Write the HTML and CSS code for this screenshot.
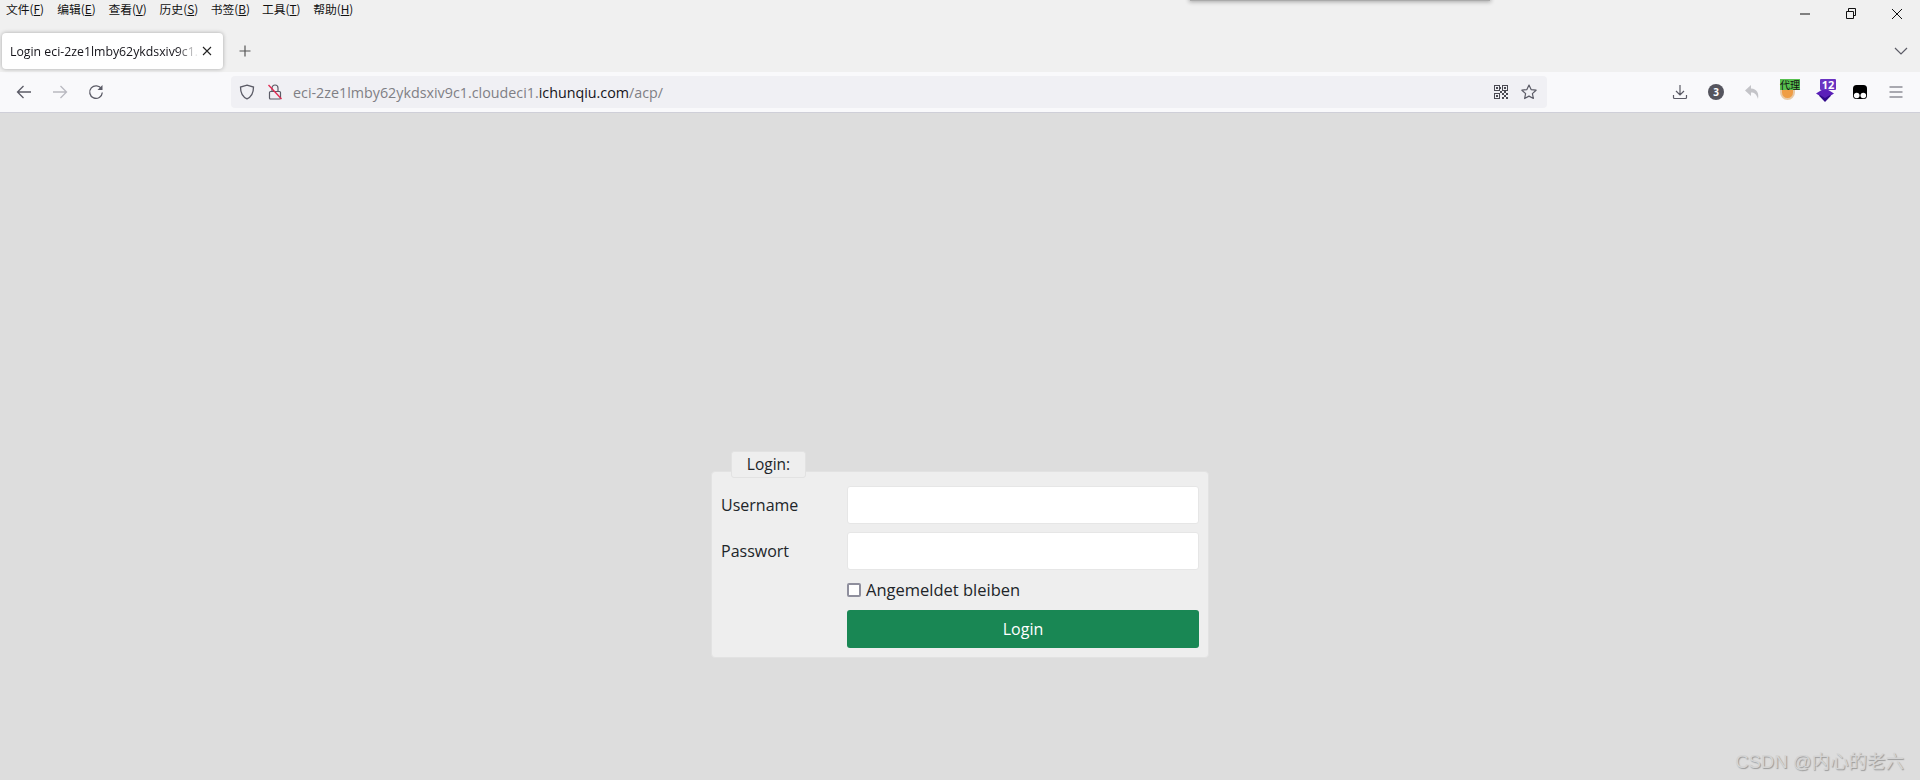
FILE: index.html
```html
<!DOCTYPE html>
<html lang="de">
<head>
<meta charset="utf-8">
<title>Login</title>
<link rel="stylesheet" href="styles.css">
</head>
<body>
<div class="popup-edge"></div>
<header class="chrome">
  <div class="titlebar">
    <nav class="menu">
      <span>文件(<u>F</u>)</span><span>编辑(<u>E</u>)</span><span>查看(<u>V</u>)</span><span>历史(<u>S</u>)</span><span>书签(<u>B</u>)</span><span>工具(<u>T</u>)</span><span>帮助(<u>H</u>)</span>
    </nav>
    <div class="winctl">
      <svg class="wbtn" viewBox="0 0 46 28"><path d="M18 14h10" stroke="#111" fill="none"/></svg>
      <svg class="wbtn" viewBox="0 0 46 28"><path d="M18.500 11.500h7v7h-7zM20.500 11v-2.500h7v7h-2" stroke="#111" fill="none"/></svg>
      <svg class="wbtn" viewBox="0 0 46 28"><path d="M18 9l10 10M28 9L18 19" stroke="#111" fill="none"/></svg>
    </div>
  </div>
  <div class="tabbar">
    <div class="tab">
      <span class="tab-title">Login eci-2ze1lmby62ykdsxiv9c1.</span>
      <svg class="tab-close" viewBox="0 0 12 12"><path d="M2 2l8 8M10 2l-8 8" stroke="#222" stroke-width="1.100" fill="none"/></svg>
    </div>
    <svg class="newtab" viewBox="0 0 14 14"><path d="M7 1.500v11M1.500 7h11" stroke="#555" stroke-width="1.200" fill="none"/></svg>
    <svg class="tabs-list" viewBox="0 0 14 8"><path d="M1 1l6 6 6-6" stroke="#5b5b66" stroke-width="1.200" fill="none"/></svg>
  </div>
  <div class="toolbar">
    <div class="tbtns">
      <span class="tbtn"><svg viewBox="0 0 16 16"><path d="M15 8H1.500M7.500 2l-6 6 6 6" stroke="#5b5b66" stroke-width="1.300" fill="none"/></svg></span>
      <span class="tbtn"><svg viewBox="0 0 16 16"><path d="M1 8h13.500M8.500 2l6 6-6 6" stroke="#b9b9c0" stroke-width="1.300" fill="none"/></svg></span>
      <span class="tbtn"><svg viewBox="0 0 16 16"><path d="M13.500 5A6.300 6.300 0 1 0 14.300 8.500" stroke="#5b5b66" stroke-width="1.300" fill="none"/><path d="M14.500 1v5h-5z" fill="#5b5b66"/></svg></span>
    </div>
    <div class="urlbar">
      <svg class="shield" viewBox="0 0 16 16"><path d="M8 1.200L14.500 3c0 6-1.800 9.800-6.500 11.800C3.300 12.800 1.500 9 1.500 3z" stroke="#5b5b66" stroke-width="1.300" fill="none"/></svg>
      <svg class="lock" viewBox="0 0 16 16"><path d="M5 7.500V4a3 3 0 0 1 6 0v3.500M3.500 7.500h9a1 1 0 0 1 1 1V14a1 1 0 0 1-1 1h-9a1 1 0 0 1-1-1V8.500a1 1 0 0 1 1-1z" stroke="#5b5b66" stroke-width="1.200" fill="none"/><path d="M1.500 1l13 14" stroke="#e22850" stroke-width="1.300"/></svg>
      <span class="url">eci-2ze1lmby62ykdsxiv9c1.cloudeci1.<b>ichunqiu.com</b>/acp/</span>
      <span class="url-end">
        <svg class="qr" viewBox="0 0 14 14"><path fill="#4a4a52" d="M0 0h6v6H0zM1 1v4h4V1zM2 2h2v2H2zM8 0h6v6H8zM9 1v4h4V1zM10 2h2v2h-2zM0 8h6v6H0zM1 9v4h4V9zM2 10h2v2H2zM6 6h2v2H6zM8 8h2v2H8zM10 6h2v2h-2zM12 8h2v2h-2zM10 10h2v2h-2zM8 12h2v2H8zM12 12h2v2h-2zM6 2h1v2H6z" fill-rule="evenodd"/></svg>
        <svg class="star" viewBox="0 0 16 16"><path d="M8 1l2.100 4.600 5 .6-3.700 3.400 1 4.900L8 12.100l-4.400 2.400 1-4.900L.9 6.200l5-.6z" stroke="#5b5b66" stroke-width="1.200" fill="none" stroke-linejoin="round"/></svg>
      </span>
    </div>
    <div class="tbtns">
      <span class="tbtn"><svg viewBox="0 0 16 16"><path d="M8 1v9.500M4 7l4 4 4-4M1.500 11v2.500a1 1 0 0 0 1 1h11a1 1 0 0 0 1-1V11" stroke="#5b5b66" stroke-width="1.200" fill="none"/></svg></span>
      <span class="tbtn"><span class="count">3</span></span>
      <span class="tbtn"><svg viewBox="0 0 16 16"><path d="M7 1L1 6.500 7 12V8.500c3.500 0 5.500 1.500 7 6.500 1.200-6-1-10-7-10.500z" fill="#c4c4c8"/></svg></span>
      <span class="tbtn"><span class="proxy"><i class="proxy-ball"></i><span class="proxy-tag">代理</span></span></span>
      <span class="tbtn"><span class="purple"><svg class="purple-arrow" viewBox="0 0 18 14"><path d="M9 0l9 5.500-9 5.500-9-5.500z" fill="#5a1fb8"/><path d="M4 7l5 3 5-3 1 .8L9 14 3 7.800z" fill="#31098a"/></svg><span class="purple-tag">12</span></span></span>
      <span class="tbtn"><svg class="mono" viewBox="0 0 16 16"><rect x="1" y="1" width="14" height="14" rx="3.500" fill="#000"/><circle cx="4.700" cy="11.500" r="2.800" fill="#fff"/><circle cx="11.300" cy="11.500" r="2.800" fill="#fff"/></svg></span>
      <span class="tbtn"><svg viewBox="0 0 16 16"><path d="M1.500 3h13M1.500 8h13M1.500 13h13" stroke="#5b5b66" stroke-width="1.200" fill="none"/></svg></span>
    </div>
  </div>
</header>
<main class="page">
  <form class="login">
    <div class="legend">Login:</div>
    <div class="panel">
      <label class="lbl" for="u">Username</label>
      <input class="field" id="u" type="text">
      <label class="lbl" for="p">Passwort</label>
      <input class="field" id="p" type="password">
      <label class="remember"><span class="box"></span>Angemeldet bleiben</label>
      <button class="submit" type="button">Login</button>
    </div>
  </form>
</main>
<div class="watermark">CSDN @内心的老六</div>
</body>
</html>
```
FILE: styles.css
```css
* { box-sizing: border-box; }
html, body { margin: 0; height: 100%; }
body {
  display: flex;
  flex-direction: column;
  height: 780px;
  overflow: hidden;
  background: #ddd;
  font-family: "Open Sans", "Noto Sans CJK SC", sans-serif;
  color: #212529;
}
.popup-edge {
  position: absolute;
  left: 1190px;
  top: -6px;
  width: 300px;
  height: 7px;
  background: #aaa;
  box-shadow: 0 0 4px 1px rgba(0,0,0,.3);
}
.chrome { background: #f0f0f0; flex: none; }
.titlebar { height: 30px; display: flex; justify-content: space-between; align-items: flex-start; }
.menu {
  display: flex;
  gap: 9.200px;
  padding: 1px 0 0 6px;
  font: 11.800px/15px "Noto Sans CJK SC", sans-serif;
  color: #111;
}
.menu span { width: 42px; white-space: nowrap; }
.winctl { display: flex; }
.wbtn { width: 46px; height: 28px; display: block; }
.tabbar { height: 42px; display: flex; align-items: center; padding: 0 12px 0 2px; }
.tab {
  width: 221px;
  height: 36px;
  background: #fff;
  border-radius: 4px;
  box-shadow: 0 0 4px rgba(0,0,0,.3);
  display: flex;
  align-items: center;
  padding: 0 10px 0 8px;
}
.tab-title {
  flex: 1;
  min-width: 0;
  white-space: nowrap;
  font: 12.300px "Open Sans", sans-serif;
  color: #15141a;
  -webkit-mask-image: linear-gradient(90deg, #000 88%, transparent);
  mask-image: linear-gradient(90deg, #000 88%, transparent);
}
.tab-close { width: 12px; height: 12px; margin-left: 2px; flex: none; }
.newtab { width: 14px; height: 14px; margin-left: 15px; }
.tabs-list { width: 14px; height: 8px; margin-left: auto; }
.toolbar {
  height: 41px;
  background: #f9f9fb;
  border-bottom: 1px solid #cfcfd8;
  display: flex;
  align-items: center;
  padding: 0 6px;
}
.tbtns { display: flex; flex: none; }
.tbtn { width: 36px; height: 32px; display: flex; align-items: center; justify-content: center; }
.tbtn svg { width: 16px; height: 16px; display: block; }
.urlbar {
  margin: 0 115px 0 117px;
  flex: 1;
  height: 32px;
  background: #f0f0f4;
  border-radius: 4px;
  display: flex;
  align-items: center;
  padding: 0 10px 0 8px;
}
.shield { width: 16px; height: 16px; }
.lock { width: 16px; height: 16px; margin-left: 12px; }
.url { margin-left: 10px; font: 14.300px "Open Sans", sans-serif; color: #7f7f85; white-space: nowrap; }
.url b { font-weight: 400; color: #15141a; }
.url-end { margin-left: auto; display: flex; align-items: center; gap: 13px; }
.qr { width: 14px; height: 14px; }
.star { width: 16px; height: 16px; }
.count {
  width: 16px; height: 16px; border-radius: 50%;
  background: #55555e; color: #fff;
  font: 700 10px/16px "Open Sans", sans-serif; text-align: center;
}
.proxy { width: 22px; height: 24px; display: block; position: relative; }
.proxy-ball { position: absolute; left: 3px; top: 7px; width: 15px; height: 13px; border-radius: 0 0 8px 8px; background: #ef9d45; border: 2px solid #e8c9a5; }
.proxy-tag { position: absolute; left: 3px; top: -1px; width: 20px; height: 11px; background: #57c04f; color: #111; font: 10px/11px "Noto Sans CJK SC", sans-serif; white-space: nowrap; }
.purple { width: 22px; height: 22px; display: block; position: relative; margin-left: 6px; }
.tbtn .purple-arrow { width: 18px; height: 14px; position: absolute; top: 7px; left: 0; }
.purple-tag { position: absolute; left: 4px; top: -2px; width: 16px; height: 11px; background: #6a33c2; color: #fff; font: 700 11px/11px "Open Sans", sans-serif; text-align: center; border-radius: 1px; }
.page { flex: 1; display: flex; justify-content: center; padding-top: 338px; }
.login { width: 498px; }
.legend {
  width: 75px;
  height: 27px;
  margin-left: 20px;
  margin-bottom: -7px;
  position: relative;
  z-index: 1;
  background: #eee;
  border: 1px solid #e2e2e2;
  border-radius: 3px;
  font-size: 15.500px;
  line-height: 25px;
  text-align: center;
}
.panel {
  height: 187px;
  background: #eee;
  border: 1px solid #e2e2e2;
  border-radius: 4px;
  padding: 14px 9px 9px 9px;
  display: grid;
  grid-template-columns: 126px 1fr;
  grid-template-rows: 38px 38px 24px 38px;
  row-gap: 8px;
}
.lbl { font-size: 16px; line-height: 38px; }
.field { height: 38px; border: 1px solid #e6e6e6; border-radius: 3px; background: #fff; width: 100%; margin: 0; }
.remember {
  grid-column: 2;
  font-size: 16.500px;
  line-height: 24px;
  display: flex;
  align-items: center;
}
.box { width: 14px; height: 14px; border: 2px solid #8f8f9d; border-radius: 2px; background: #fff; margin-right: 5px; }
.submit {
  grid-column: 2;
  height: 38px;
  border: 0;
  border-radius: 3px;
  background: #198754;
  color: #fff;
  font: 16px "Open Sans", sans-serif;
}
.watermark {
  position: absolute;
  right: 16px;
  bottom: 7px;
  font: 18.500px "Liberation Sans", "Noto Sans CJK SC", sans-serif;
  color: #d4d4d4;
  text-shadow: 1px 1px 1px #9a9a9a;
}
```
